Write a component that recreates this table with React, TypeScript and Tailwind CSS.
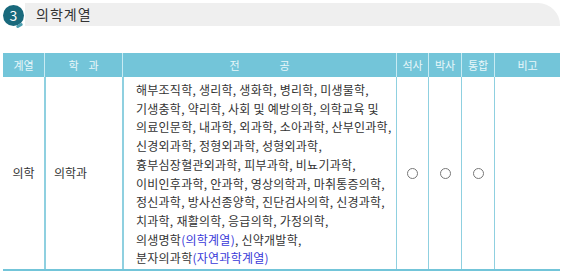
const majors: { text: string; note?: string }[][] = [
  [{ text: "해부조직학, 생리학, 생화학, 병리학, 미생물학," }],
  [{ text: "기생충학, 약리학, 사회 및 예방의학, 의학교육 및" }],
  [{ text: "의료인문학, 내과학, 외과학, 소아과학, 산부인과학," }],
  [{ text: "신경외과학, 정형외과학, 성형외과학," }],
  [{ text: "흉부심장혈관외과학, 피부과학, 비뇨기과학," }],
  [{ text: "이비인후과학, 안과학, 영상의학과, 마취통증의학," }],
  [{ text: "정신과학, 방사선종양학, 진단검사의학, 신경과학," }],
  [{ text: "치과학, 재활의학, 응급의학, 가정의학," }],
  [{ text: "의생명학" }, { text: "(의학계열)", note: "blue" }, { text: ", 신약개발학," }],
  [{ text: "분자의과학" }, { text: "(자연과학계열)", note: "blue" }],
];

const Mark = () => (
  <div className="w-[11px] h-[11px] rounded-full border border-[#777]" />
);

export default function App() {
  return (
    <div
      className="w-[563px] h-[277px] bg-white overflow-hidden text-[#333]"
      style={{ fontFamily: '"Noto Sans CJK KR", "Noto Sans", sans-serif' }}
    >
      {/* section title */}
      <div className="flex items-end h-[26px] pt-[3px] pl-[3px] pr-[3px]">
        <div className="relative w-[21px] h-[21px] shrink-0">
          <div className="w-[21px] h-[21px] rounded-full bg-[#19697c] text-white text-[14px] leading-[21px] text-center">
            3
          </div>
          <div className="absolute right-[1px] bottom-[-1px] w-[7px] h-[3px] bg-[#4a9cad] rounded-full rotate-[-30deg]" />
        </div>
        <div className="flex-1 h-[23px] ml-[1px] bg-[#efefef] rounded-tr-[22px] flex items-center pl-[11px]">
          <span className="text-[14px] tracking-[1px] text-[#333]">의학계열</span>
        </div>
      </div>

      {/* table */}
      <div className="mt-[27px] mx-[3px] w-[557px]">
        <div className="flex h-[24px] bg-[#73c5d9] text-[11px] text-[#e8f7fa] items-center">
          <div className="w-[41px] text-center">계열</div>
          <div className="w-[78px] h-full border-l border-[#c8ebf3] flex items-center justify-center tracking-[10px] pl-[10px]">학과</div>
          <div className="w-[274px] h-full border-l border-[#c8ebf3] flex items-center justify-center tracking-[40px] pl-[40px]">전공</div>
          <div className="w-[32px] h-full border-l border-[#c8ebf3] flex items-center justify-center">석사</div>
          <div className="w-[33px] h-full border-l border-[#c8ebf3] flex items-center justify-center">박사</div>
          <div className="w-[33px] h-full border-l border-[#c8ebf3] flex items-center justify-center">통합</div>
          <div className="w-[66px] h-full border-l border-[#c8ebf3] flex items-center justify-center">비고</div>
        </div>
        <div className="flex h-[194px] border-b-2 border-[#73c5d9] text-[12px]">
          <div className="w-[41px] flex items-center justify-center">의학</div>
          <div className="w-[78px] border-l-2 border-[#8fd0e0] flex items-center pl-[8px]">의학과</div>
          <div className="w-[274px] border-l-2 border-[#8fd0e0] pl-[12px] pt-[4px] leading-[18.7px] tracking-[0.25px] whitespace-nowrap">
            {majors.map((line, i) => (
              <div key={i}>
                {line.map((part, j) => (
                  <span key={j} className={part.note ? "text-[#3838d8]" : ""}>
                    {part.text}
                  </span>
                ))}
              </div>
            ))}
          </div>
          <div className="w-[32px] border-l border-[#8fd0e0] flex items-center justify-center"><Mark /></div>
          <div className="w-[33px] border-l border-[#8fd0e0] flex items-center justify-center"><Mark /></div>
          <div className="w-[33px] border-l border-[#8fd0e0] flex items-center justify-center"><Mark /></div>
          <div className="w-[66px] border-l border-[#8fd0e0]" />
        </div>
      </div>
    </div>
  );
}
